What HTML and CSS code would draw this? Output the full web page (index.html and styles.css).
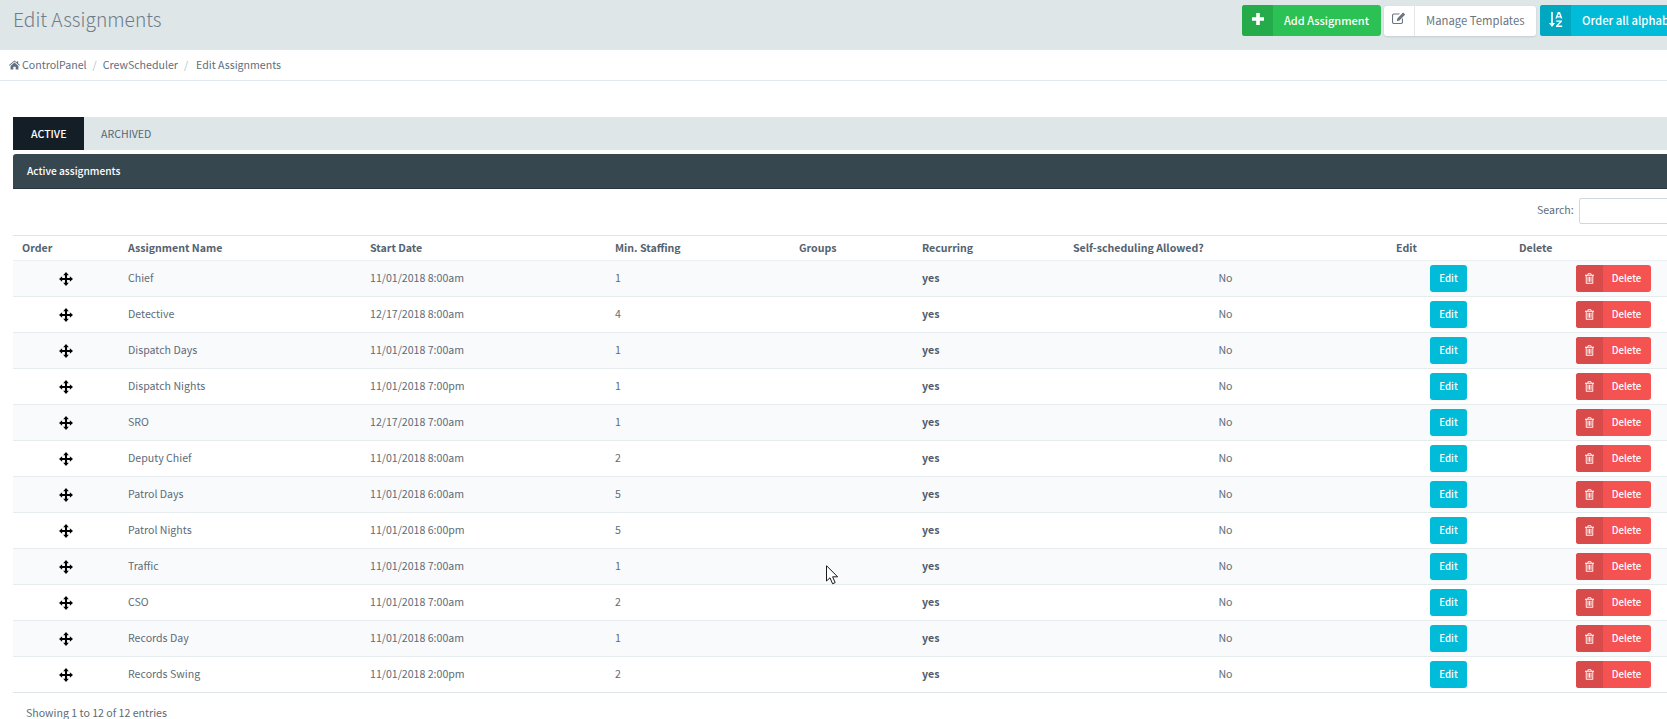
FILE: index.html
```html
<!DOCTYPE html>
<html lang="en">
<head>
<meta charset="utf-8">
<title>Edit Assignments</title>
<link rel="stylesheet" href="styles.css">
</head>
<body>
<svg class="defs" width="0" height="0" aria-hidden="true">
  <symbol id="i-move" viewBox="0 0 16 16"><path d="M8 0 11.2 3.6H9.2V6.8H12.4V4.8L16 8 12.4 11.2V9.2H9.2V12.4H11.2L8 16 4.8 12.4H6.8V9.2H3.6V11.2L0 8 3.6 4.8V6.8H6.8V3.6H4.8Z"/></symbol>
  <symbol id="i-trash" viewBox="0 0 12 14"><path d="M4 0H8L9 2H12V3.2H11V13A1 1 0 0 1 10 14H2A1 1 0 0 1 1 13V3.2H0V2H3ZM4.4 2H7.6L7.2 1.1H4.8ZM2.2 3.2V12.8H9.8V3.2ZM3.4 4.6H4.6V11.4H3.4ZM5.4 4.6H6.6V11.4H5.4ZM7.4 4.6H8.6V11.4H7.4Z"/></symbol>
</svg>

<header class="page-head">
  <h1 class="page-title">Edit Assignments</h1>
  <div class="head-actions">
    <a class="btn-lbl green"><span class="lbl"><svg width="12" height="12" viewBox="0 0 12 12"><path d="M4.2 0H7.8V4.2H12V7.8H7.8V12H4.2V7.8H0V4.2H4.2Z"/></svg></span><span class="txt">Add Assignment</span></a>
    <a class="btn-lbl light"><span class="lbl"><svg width="14" height="12" viewBox="0 0 14 12"><path d="M1.8 1.5H8L7 2.6H2A.9.9 0 0 0 1.1 3.5V10A.9.9 0 0 0 2 10.9H9A.9.9 0 0 0 9.9 10V7L11 6V10.2A1.8 1.8 0 0 1 9.2 12H1.8A1.8 1.8 0 0 1 0 10.2V3.3A1.8 1.8 0 0 1 1.8 1.5ZM11 .6 13.2 2.6 7.4 8.6 4.8 9.2 5.3 6.6Z"/></svg></span><span class="txt">Manage Templates</span></a>
    <a class="btn-lbl teal"><span class="lbl"><svg width="14" height="15" viewBox="0 0 14 15"><path d="M2.2 0H3.8V11H6L3 15 0 11H2.2ZM8.8 0H11L13.4 6.6H11.9L11.5 5.4H8.3L7.9 6.6H6.4ZM8.7 4.2H11.1L9.9 1.4ZM7.2 8.4H13V9.6L9.2 13.6H13.2V15H7V13.7L10.8 9.8H7.2Z"/></svg></span><span class="txt">Order all alphabetically</span></a>
  </div>
</header>

<nav class="crumbs">
  <svg class="home" width="11" height="10" viewBox="0 0 12 10"><path d="M6 0 8.6 2.2V1H10V3.4L12 5.1 11.4 5.8 6 1.3 .6 5.8 0 5.1ZM6 2.4 10.3 6V10H7.3V7H4.7V10H1.7V6Z"/></svg>
  <a class="crumb">ControlPanel</a><span class="sep">/</span><a class="crumb">CrewScheduler</a><span class="sep sep-last">/</span><span class="crumb">Edit Assignments</span>
</nav>

<main class="content">
  <div class="tabs">
    <a class="tab active">ACTIVE</a>
    <a class="tab">ARCHIVED</a>
  </div>
  <section class="panel">
    <div class="panel-head">Active assignments</div>
    <div class="search-row">
      <label class="search-label" for="q">Search:</label>
      <input class="search-input" id="q" type="search">
    </div>
    <table class="grid">
      <colgroup>
        <col class="c1"><col class="c2"><col class="c3"><col class="c4"><col class="c5"><col class="c6"><col class="c7"><col class="c8"><col class="c9">
      </colgroup>
      <thead>
        <tr><th>Order</th><th>Assignment Name</th><th>Start Date</th><th>Min. Staffing</th><th>Groups</th><th>Recurring</th><th>Self-scheduling Allowed?</th><th>Edit</th><th>Delete</th></tr>
      </thead>
      <tbody>
        <tr><td class="ctr"><svg class="move"><use href="#i-move"/></svg></td><td>Chief</td><td>11/01/2018 8:00am</td><td>1</td><td></td><td class="strong">yes</td><td class="ctr">No</td><td class="ctr"><a class="btn-edit">Edit</a></td><td class="ctr"><a class="btn-del"><span class="del-ic"><svg class="trash"><use href="#i-trash"/></svg></span><span class="del-txt">Delete</span></a></td></tr>
        <tr><td class="ctr"><svg class="move"><use href="#i-move"/></svg></td><td>Detective</td><td>12/17/2018 8:00am</td><td>4</td><td></td><td class="strong">yes</td><td class="ctr">No</td><td class="ctr"><a class="btn-edit">Edit</a></td><td class="ctr"><a class="btn-del"><span class="del-ic"><svg class="trash"><use href="#i-trash"/></svg></span><span class="del-txt">Delete</span></a></td></tr>
        <tr><td class="ctr"><svg class="move"><use href="#i-move"/></svg></td><td>Dispatch Days</td><td>11/01/2018 7:00am</td><td>1</td><td></td><td class="strong">yes</td><td class="ctr">No</td><td class="ctr"><a class="btn-edit">Edit</a></td><td class="ctr"><a class="btn-del"><span class="del-ic"><svg class="trash"><use href="#i-trash"/></svg></span><span class="del-txt">Delete</span></a></td></tr>
        <tr><td class="ctr"><svg class="move"><use href="#i-move"/></svg></td><td>Dispatch Nights</td><td>11/01/2018 7:00pm</td><td>1</td><td></td><td class="strong">yes</td><td class="ctr">No</td><td class="ctr"><a class="btn-edit">Edit</a></td><td class="ctr"><a class="btn-del"><span class="del-ic"><svg class="trash"><use href="#i-trash"/></svg></span><span class="del-txt">Delete</span></a></td></tr>
        <tr><td class="ctr"><svg class="move"><use href="#i-move"/></svg></td><td>SRO</td><td>12/17/2018 7:00am</td><td>1</td><td></td><td class="strong">yes</td><td class="ctr">No</td><td class="ctr"><a class="btn-edit">Edit</a></td><td class="ctr"><a class="btn-del"><span class="del-ic"><svg class="trash"><use href="#i-trash"/></svg></span><span class="del-txt">Delete</span></a></td></tr>
        <tr><td class="ctr"><svg class="move"><use href="#i-move"/></svg></td><td>Deputy Chief</td><td>11/01/2018 8:00am</td><td>2</td><td></td><td class="strong">yes</td><td class="ctr">No</td><td class="ctr"><a class="btn-edit">Edit</a></td><td class="ctr"><a class="btn-del"><span class="del-ic"><svg class="trash"><use href="#i-trash"/></svg></span><span class="del-txt">Delete</span></a></td></tr>
        <tr><td class="ctr"><svg class="move"><use href="#i-move"/></svg></td><td>Patrol Days</td><td>11/01/2018 6:00am</td><td>5</td><td></td><td class="strong">yes</td><td class="ctr">No</td><td class="ctr"><a class="btn-edit">Edit</a></td><td class="ctr"><a class="btn-del"><span class="del-ic"><svg class="trash"><use href="#i-trash"/></svg></span><span class="del-txt">Delete</span></a></td></tr>
        <tr><td class="ctr"><svg class="move"><use href="#i-move"/></svg></td><td>Patrol Nights</td><td>11/01/2018 6:00pm</td><td>5</td><td></td><td class="strong">yes</td><td class="ctr">No</td><td class="ctr"><a class="btn-edit">Edit</a></td><td class="ctr"><a class="btn-del"><span class="del-ic"><svg class="trash"><use href="#i-trash"/></svg></span><span class="del-txt">Delete</span></a></td></tr>
        <tr><td class="ctr"><svg class="move"><use href="#i-move"/></svg></td><td>Traffic</td><td>11/01/2018 7:00am</td><td>1</td><td></td><td class="strong">yes</td><td class="ctr">No</td><td class="ctr"><a class="btn-edit">Edit</a></td><td class="ctr"><a class="btn-del"><span class="del-ic"><svg class="trash"><use href="#i-trash"/></svg></span><span class="del-txt">Delete</span></a></td></tr>
        <tr><td class="ctr"><svg class="move"><use href="#i-move"/></svg></td><td>CSO</td><td>11/01/2018 7:00am</td><td>2</td><td></td><td class="strong">yes</td><td class="ctr">No</td><td class="ctr"><a class="btn-edit">Edit</a></td><td class="ctr"><a class="btn-del"><span class="del-ic"><svg class="trash"><use href="#i-trash"/></svg></span><span class="del-txt">Delete</span></a></td></tr>
        <tr><td class="ctr"><svg class="move"><use href="#i-move"/></svg></td><td>Records Day</td><td>11/01/2018 6:00am</td><td>1</td><td></td><td class="strong">yes</td><td class="ctr">No</td><td class="ctr"><a class="btn-edit">Edit</a></td><td class="ctr"><a class="btn-del"><span class="del-ic"><svg class="trash"><use href="#i-trash"/></svg></span><span class="del-txt">Delete</span></a></td></tr>
        <tr><td class="ctr"><svg class="move"><use href="#i-move"/></svg></td><td>Records Swing</td><td>11/01/2018 2:00pm</td><td>2</td><td></td><td class="strong">yes</td><td class="ctr">No</td><td class="ctr"><a class="btn-edit">Edit</a></td><td class="ctr"><a class="btn-del"><span class="del-ic"><svg class="trash"><use href="#i-trash"/></svg></span><span class="del-txt">Delete</span></a></td></tr>
      </tbody>
    </table>
    <div class="info">Showing 1 to 12 of 12 entries</div>
  </section>
</main>

<svg class="cursor" width="13" height="20" viewBox="0 0 13 20" aria-hidden="true"><path d="M.5.7V16L4 12.8 6.6 18.8 9.2 17.6 6.6 11.8H11.6Z" fill="#fff" stroke="#1a1a1a"/></svg>
</body>
</html>
```
FILE: styles.css
```css
html, body { margin: 0; padding: 0; height: 719px; overflow: hidden; background: #fff; }
body { font-family: "Noto Sans CJK JP", "Source Sans Pro", "Noto Sans", sans-serif; font-size: 10.6px; color: #5d6b78; position: relative; width: 1667px; }
.defs { position: absolute; }
a { color: inherit; text-decoration: none; }

.page-head { height: 50px; background: #dee6e8; display: flex; justify-content: space-between; padding-left: 13px; width: 1800px; box-sizing: border-box; }
.page-title { margin: 0; font-size: 19.2px; font-weight: 300; line-height: 38px; color: #6f7c88; }
.head-actions { display: flex; padding-top: 5px; position: absolute; left: 1242px; }
.btn-lbl { display: flex; height: 31px; border-radius: 3px; line-height: 30px; font-size: 11.3px; overflow: hidden; }
.btn-lbl .lbl { width: 31px; display: flex; justify-content: center; flex: none; box-sizing: border-box; }
.btn-lbl svg { display: block; fill: currentColor; }
.btn-lbl .txt { padding: 0 11px; white-space: nowrap; }
.green { background: #2bc155; color: #fff; width: 139px; margin-right: 3px; font-size: 11px; font-weight: 500; }
.green .lbl { background: #26ab4b; padding-top: 8px; }
.green .txt { padding: 0 0 0 11px; }
.light { background: #fff; color: #6b7580; box-shadow: 0 1px 2px rgba(120,130,140,.25); height: 30px; margin-top: 1px; line-height: 29px; width: 152px; margin-right: 4px; }
.light .lbl { border-right: 1px solid #e4e7ea; padding-top: 6px; }
.teal { background: #00bcd9; color: #fff; font-weight: 500; }
.teal .lbl { background: #00a7c1; padding-top: 7px; }

.crumbs { height: 30px; border-bottom: 1px solid #e2e8ec; display: flex; align-items: center; padding-left: 9px; line-height: 30px; color: #5f6e7d; }
.home { fill: #5f6e7d; margin-right: 2px; }
.sep { color: #b8c0c8; padding: 0 6px; }
.sep-last { padding: 0 8px 0 6px; }

.content { padding: 36px 0 0 13px; }
.tabs { height: 33px; background: #dee6e8; display: flex; width: 1720px; }
.tab { line-height: 33px; padding: 0 17px; font-size: 10.6px; color: #54667a; }
.tab.active { background: #141e27; color: #fff; width: 71px; box-sizing: border-box; padding: 0 0 0 18px; font-weight: 500; }

.panel { width: 1720px; }
.panel-head { margin-top: 4px; height: 34px; border-bottom: 1px solid #2a3339; border-radius: 3px 3px 0 0; background: #37474f; color: #fff; line-height: 33px; padding-left: 14px; font-size: 10.2px; font-weight: 500; }
.search-row { height: 46px; display: flex; align-items: flex-start; padding-left: 1524px; box-sizing: border-box; }
.search-label { margin-top: 12px; line-height: 18px; width: 42px; flex: none; }
.search-input { margin-top: 9px; margin-left: 0; width: 120px; height: 26px; box-sizing: border-box; border: 1px solid #cfd8dc; border-radius: 2px; background: #fff; flex: none; }

.grid { border-collapse: collapse; table-layout: fixed; width: 1703px; border-top: 1px solid #e2e5e7; }
.c1 { width: 106px; } .c2 { width: 242px; } .c3 { width: 245px; } .c4 { width: 184px; } .c5 { width: 123px; }
.c6 { width: 151px; } .c7 { width: 323px; } .c8 { width: 123px; } .c9 { width: 206px; }
.grid th { height: 24px; padding: 0 9px; text-align: left; font-weight: 700; color: #54626f; border-bottom: 1px solid #edf0f2; line-height: 24px; }
.grid td { height: 35px; padding: 0 9px; border-bottom: 1px solid #e6ebee; line-height: 33px; vertical-align: top; }
.grid tbody tr:nth-child(odd) { background: #f9fafc; }
.grid tbody tr:last-child td { border-bottom-color: #dfe5e8; }
.grid .ctr { text-align: center; }
.grid .strong { font-weight: 700; color: #4f5c69; }
.move { width: 14px; height: 14px; fill: #000; display: block; margin: 11px auto 0; }
.btn-edit { display: block; width: 37px; height: 27px; margin: 4px auto 0; background: #00bcd9; color: #fff; border-radius: 3px; line-height: 26px; font-size: 9.7px; font-weight: 500; }
.btn-del { display: flex; width: 75px; height: 27px; margin: 4px auto 0; background: #f55252; color: #fff; border-radius: 3px; overflow: hidden; line-height: 26px; font-size: 9.7px; font-weight: 500; }
.del-ic { width: 27px; background: #d94a4b; display: flex; align-items: center; justify-content: center; }
.del-txt { flex: 1; text-align: center; }
.trash { width: 9px; height: 11px; fill: #fff; display: block; }
.info { padding: 11px 0 0 13px; line-height: 18px; }

.cursor { position: absolute; left: 826px; top: 565px; }
```
